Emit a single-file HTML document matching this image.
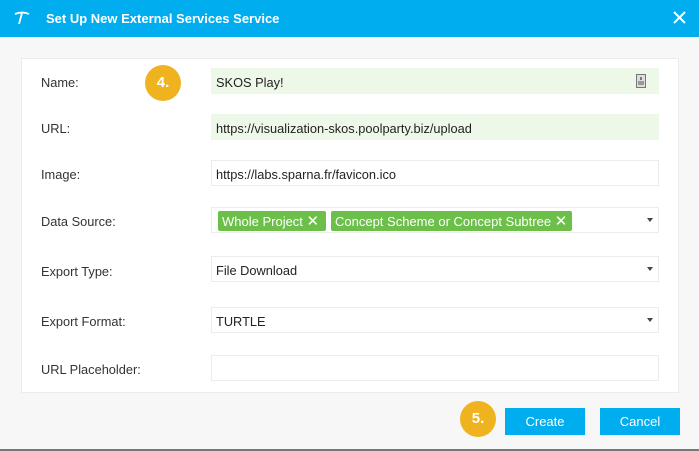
<!DOCTYPE html>
<html><head><style>
*{box-sizing:border-box;margin:0;padding:0}
body{width:699px;height:451px;background:#f7f7f7;font-family:"Liberation Sans",Arial,sans-serif;font-size:13px;color:#333;position:relative;overflow:hidden}
.hdr{position:absolute;left:0;top:0;width:699px;height:37px;background:#00adee;color:#fff}
.hdr .t{position:absolute;left:46px;top:11px;font-weight:bold;font-size:13px}
.panel{position:absolute;left:21px;top:58px;width:658px;height:335px;background:#fff;border:1px solid #ececec}
.lbl{position:absolute;left:41px;font-size:12.8px;color:#333}
.in{position:absolute;left:211px;width:448px;height:26px;border:1px solid #ececec;background:#fff;padding:6px 4px;font-size:12.8px;color:#222}
.g{background:#eef8e9;border-color:#eef8e9}
.arr{position:absolute;right:5px;top:10px;width:0;height:0;border-left:3px solid transparent;border-right:3px solid transparent;border-top:4px solid #444}
.tag{position:absolute;top:3px;height:20px;background:#6cc04a;color:#fff;border-radius:2px;padding:3px 4px;font-size:13px;white-space:nowrap}
.badge{position:absolute;width:36px;height:36px;border-radius:50%;background:#efb320;color:#fff;font-weight:bold;font-size:15px;text-align:center;line-height:36px}
.btn{position:absolute;top:408px;width:80px;height:27px;background:#00adee;color:#fff;text-align:center;line-height:27px;font-size:13px}
.bl{position:absolute;left:0;top:449px;width:699px;height:2px;background:#777}
</style></head><body>
<div class="hdr">
<svg style="position:absolute;left:14px;top:11px" width="16" height="14" viewBox="0 0 16 14"><path d="M1 3 Q8 0 15 3" stroke="#fff" stroke-width="1.8" fill="none"/><path d="M8 2 L5 13" stroke="#fff" stroke-width="1.8"/></svg>
<div class="t">Set Up New External Services Service</div>
<svg style="position:absolute;left:673px;top:11px" width="13" height="13"><path d="M1 1L12 12M12 1L1 12" stroke="#fff" stroke-width="2"/></svg>
</div>
<div class="panel"></div>
<div class="lbl" style="top:75px">Name:</div>
<div class="in g" style="top:68px">SKOS Play!<svg style="position:absolute;right:12px;top:5px" width="10" height="14"><rect x="0.5" y="0.5" width="9" height="13" fill="#ddd" stroke="#777"/><rect x="4" y="3" width="2" height="3" fill="#777"/><rect x="2" y="7" width="6" height="4" fill="#999"/></svg></div>
<div class="badge" style="left:145px;top:65px">4.</div>
<div class="lbl" style="top:121px">URL:</div>
<div class="in g" style="top:114px">https://visualization-skos.poolparty.biz/upload</div>
<div class="lbl" style="top:167px">Image:</div>
<div class="in" style="top:160px">https://labs.sparna.fr/favicon.ico</div>
<div class="lbl" style="top:214px">Data Source:</div>
<div class="in" style="top:207px"><span class="tag" style="left:6px;width:108px">Whole Project <span style="font-size:15px;line-height:13px">✕</span></span><span class="tag" style="left:119px;width:241px">Concept Scheme or Concept Subtree <span style="font-size:15px;line-height:13px">✕</span></span><span class="arr"></span></div>
<div class="lbl" style="top:264px">Export Type:</div>
<div class="in" style="top:256px">File Download<span class="arr"></span></div>
<div class="lbl" style="top:314px">Export Format:</div>
<div class="in" style="top:307px">TURTLE<span class="arr"></span></div>
<div class="lbl" style="top:362px">URL Placeholder:</div>
<div class="in" style="top:355px"></div>
<div class="badge" style="left:460px;top:401px">5.</div>
<div class="btn" style="left:505px">Create</div>
<div class="btn" style="left:600px">Cancel</div>
<div class="bl"></div>
</body></html>
